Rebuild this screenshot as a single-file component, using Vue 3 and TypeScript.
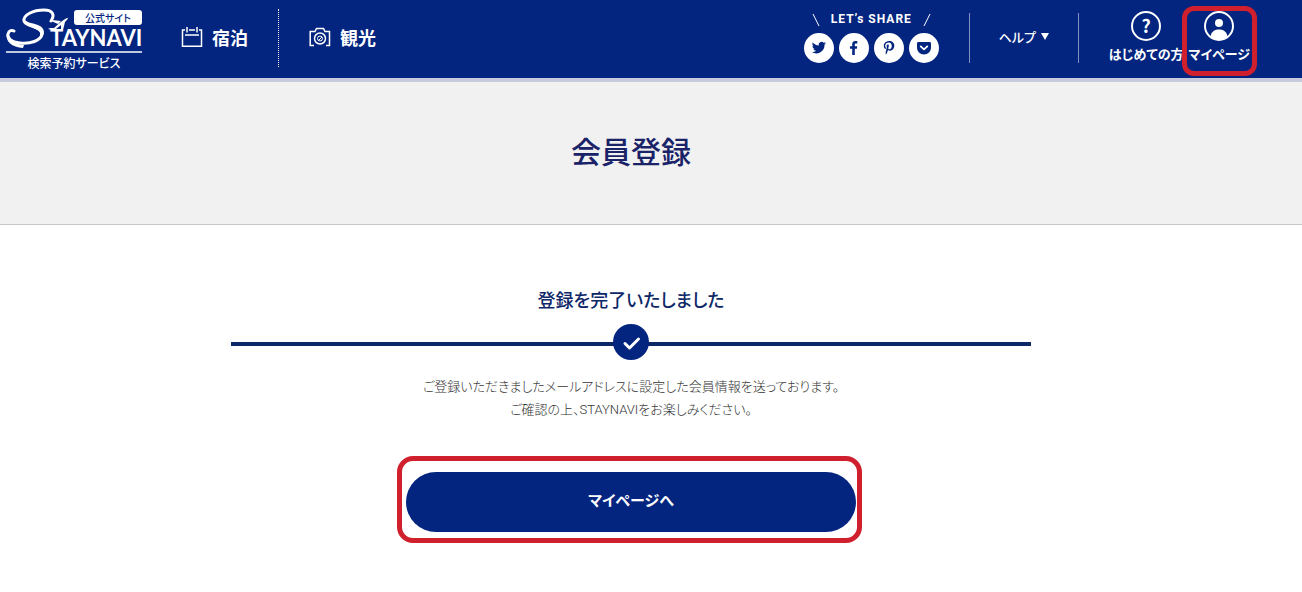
<script setup lang="ts">
interface NavItem {
  label: string
  icon: 'calendar' | 'camera'
}

interface ShareItem {
  name: string
  path: string
}

const navItems: NavItem[] = [
  { label: '宿泊', icon: 'calendar' },
  { label: '観光', icon: 'camera' },
]

const shareItems: ShareItem[] = [
  {
    name: 'Twitter',
    path: 'M22 10.2c-.5.3-1.1.4-1.7.5.6-.4 1-.9 1.2-1.6-.6.3-1.2.6-1.8.7a2.9 2.9 0 0 0-5 2.6c-2.4-.1-4.5-1.3-5.9-3-.8 1.4-.4 3 .9 3.9-.5 0-.9-.1-1.3-.4 0 1.4 1 2.6 2.3 2.9-.4.1-.9.1-1.3 0 .4 1.2 1.4 2 2.7 2a5.8 5.8 0 0 1-4.2 1.2 8.2 8.2 0 0 0 12.6-7.3c.6-.4 1.1-.9 1.5-1.5z',
  },
  {
    name: 'Facebook',
    path: 'M13.2 22v-6.2H11v-2.6h2.2v-1.9C13.2 9.1 14.5 8 16.4 8c.9 0 1.7.1 1.9.1v2.3H17c-1 0-1.2.5-1.2 1.2v1.6h2.4l-.3 2.6h-2.1V22z',
  },
  {
    name: 'Pinterest',
    path: 'M15.3 8c-3.600 0-5.500 2.400-5.500 4.900 0 1.200.6 2.600 1.600 3.100.3.100.3 0 .5-1 .1-.2 0-.3-.1-.4-1.200-1.600-.5-5.100 2.900-5.100 4.300 0 3.600 6.800.8 6.800-.8 0-1.400-.6-1.200-1.400.2-.9.600-1.800.6-2.400 0-1.600-2.300-1.400-2.300.7 0 .7.200 1.100.2 1.100l-1 4.100c-.3 1.100 0 2.900.1 3.100.1.100.2.100.2 0 .5-.7 1.100-1.700 1.400-2.900l.5-1.900c.3.500 1.100 1 1.900 1 2.600 0 4.400-2.300 4.400-5.200C20.300 9.800 18.100 8 15.300 8z',
  },
  {
    name: 'Pocket',
    path: 'M9.3 9h11.400c.7 0 1.300.6 1.300 1.300v4.200c0 3.900-3.100 7-7 7s-7-3.100-7-7v-4.200C8 9.600 8.600 9 9.300 9zm2.600 3.500a.9.900 0 0 0-.8 1.500l3.300 3.100c.4.300.8.300 1.200 0l3.300-3.100c.9-.9-.3-2.100-1.200-1.300L15 15.200l-2.600-2.500z',
  },
]

const message: string[] = [
  'ご登録いただきましたメールアドレスに設定した会員情報を送っております。',
  'ご確認の上、STAYNAVIをお楽しみください。',
]
</script>

<template>
  <div class="page">
    <header class="header">
      <a class="logo" href="#" aria-label="STAYNAVI">
        <svg class="logo-mark" viewBox="0 0 136 46" aria-hidden="true">
          <path
            d="M45 14C49 8 47 3 38 3C27 3 17 8 18 14C19 20 37 19 36 27C35 34 24 37 14 36C5 35 1 31 2 27C3 23 6 23 8 24"
            fill="none" stroke="#fff" stroke-width="3" stroke-linecap="round" stroke-linejoin="round"
          />
          <path d="M18 12C17 20 28 19 33 24C36 28 33 32 30 34C38 32 41 23 34 19C29 16 20 16 18 12z" fill="#fff" />
          <path d="M1 26C1 34 8 37 18 38L17 41C6 40-1 35 1 26z" fill="#fff" />
          <path
            d="M44 25C49 20 55 14 61 11C63 11 61 13 59 15L57 23L55 23L55 18L50 22L49 25L47 23L42 22L44 21L48 21L52 17L45 14L46 13L55 14L51 18z"
            fill="#fff"
          />
          <text class="logo-text" x="44" y="39">TAYNAVI</text>
          <path d="M0 45H136" stroke="#fff" stroke-width="1.5" />
        </svg>
        <span class="logo-badge">公式サイト</span>
        <span class="logo-sub">検索予約サービス</span>
      </a>

      <nav class="nav">
        <a v-for="item in navItems" :key="item.label" class="nav-item" href="#">
          <svg v-if="item.icon === 'calendar'" class="nav-icon" viewBox="0 0 22 22" aria-hidden="true">
            <path
              d="M4 4H1.500V20.200H20.500V4H18M8 4H14M6 1V6.500M16 1V6.500M4 9H18"
              fill="none" stroke="#fff" stroke-width="1.5"
            />
          </svg>
          <svg v-else class="nav-icon" viewBox="0 0 22 22" aria-hidden="true">
            <path
              d="M5 19.500H1.200V5.500H6L7.500 2.500H14.500L16 5.500H20.500V19.500H17"
              fill="none" stroke="#fff" stroke-width="1.5"
            />
            <circle cx="11" cy="12.500" r="5.500" fill="none" stroke="#fff" stroke-width="1.5" />
            <circle cx="11" cy="12.500" r="2.500" fill="none" stroke="#fff" />
            <path d="M10 14L13 11" fill="none" stroke="#fff" />
          </svg>
          <span>{{ item.label }}</span>
        </a>
      </nav>

      <div class="share">
        <p class="share-title">
          <svg class="slash" viewBox="0 0 8 12" aria-hidden="true"><path d="M1 0L7 12" stroke="#fff" /></svg>
          <span>LET’s SHARE</span>
          <svg class="slash" viewBox="0 0 8 12" aria-hidden="true"><path d="M7 0L1 12" stroke="#fff" /></svg>
        </p>
        <div class="share-list">
          <a v-for="item in shareItems" :key="item.name" class="share-link" href="#" :aria-label="item.name">
            <svg viewBox="0 0 30 30" aria-hidden="true">
              <path :d="item.path" fill="#03257f" fill-rule="evenodd" />
            </svg>
          </a>
        </div>
      </div>

      <button class="help" type="button">
        <span>ヘルプ</span>
        <svg class="caret" viewBox="0 0 8 7" aria-hidden="true"><path d="M0 0H8L4 7z" fill="#fff" /></svg>
      </button>

      <div class="account">
        <a class="account-link" href="#">
          <span class="question">?</span>
          <span>はじめての方</span>
        </a>
        <a class="account-link marked" href="#">
          <svg class="account-icon" viewBox="0 0 30 30" aria-hidden="true">
            <circle cx="15" cy="15" r="14" fill="none" stroke="#fff" stroke-width="2" />
            <circle cx="15" cy="12" r="4" fill="#fff" />
            <path d="M6.500 26C7 21 10 18.500 15 18.500S23 21 23.500 26C19 30 11 30 6.500 26z" fill="#fff" />
          </svg>
          <span>マイページ</span>
        </a>
      </div>
    </header>

    <div class="hero">
      <h1>会員登録</h1>
    </div>

    <main class="content">
      <h2>登録を完了いたしました</h2>
      <div class="divider">
        <svg class="check" viewBox="0 0 36 36" aria-hidden="true">
          <circle cx="18" cy="18" r="18" fill="#03257f" />
          <path
            d="M12 19.500L16.500 24L25.500 15"
            fill="none" stroke="#fff" stroke-width="3" stroke-linecap="round" stroke-linejoin="round"
          />
        </svg>
      </div>
      <p class="message">
        <span v-for="line in message" :key="line">{{ line }}</span>
      </p>
      <div class="action">
        <button class="submit" type="button">マイページへ</button>
      </div>
    </main>
  </div>
</template>

<style>
body {
  margin: 0;
  background: #fff;
}
</style>

<style scoped>
.page {
  font-family: "Noto Sans CJK JP", "Noto Sans", sans-serif;
  font-feature-settings: "palt";
  color: #333;
}

a {
  color: inherit;
  text-decoration: none;
}

button {
  border: 0;
  padding: 0;
  background: none;
  color: inherit;
  font: inherit;
  font-feature-settings: inherit;
  cursor: pointer;
}

.header {
  display: flex;
  box-sizing: border-box;
  height: 82px;
  padding: 0 52px 0 6px;
  background: #03257f;
  border-bottom: 4px solid #c8cbdc;
  color: #fff;
}

.logo {
  position: relative;
  flex: none;
  width: 136px;
  padding-top: 7px;
}

.logo-mark {
  display: block;
  width: 136px;
  height: 46px;
  overflow: visible;
}

.logo-text {
  font: 700 22px Lato, sans-serif;
  fill: #fff;
}

.logo-badge {
  position: absolute;
  top: 10px;
  right: 0;
  width: 68px;
  border-radius: 3px;
  background: #fff;
  color: #03257f;
  font-size: 10px;
  font-weight: 500;
  line-height: 15px;
  text-align: center;
}

.logo-sub {
  display: block;
  font-size: 12px;
  font-weight: 500;
  line-height: 20px;
  text-align: center;
}

.nav {
  display: flex;
  align-items: flex-start;
  margin: 9px auto 0 9px;
}

.nav-item {
  display: flex;
  align-items: center;
  gap: 9px;
  box-sizing: border-box;
  height: 58px;
  padding: 0 30px 2px;
  font-size: 18px;
  font-weight: 700;
}

.nav-item + .nav-item {
  border-left: 1px dotted #fff;
}

.nav-icon {
  width: 22px;
  height: 22px;
}

.share {
  padding: 12px 30px 0 0;
}

.share-title {
  display: flex;
  align-items: center;
  justify-content: center;
  gap: 11px;
  margin: 0 0 6px;
  font: 700 12px/15px Roboto, sans-serif;
  letter-spacing: 1px;
}

.slash {
  width: 8px;
  height: 12px;
}

.share-list {
  display: flex;
  gap: 5px;
}

.share-link {
  width: 30px;
  height: 30px;
  border-radius: 50%;
  background: #fff;
}

.share-link svg {
  display: block;
}

.help {
  display: flex;
  align-items: center;
  justify-content: center;
  gap: 5px;
  box-sizing: border-box;
  width: 110px;
  height: 50px;
  margin-top: 13px;
  padding-bottom: 3px;
  border: solid #8192bf;
  border-width: 0 1px;
  font-size: 13px;
  font-weight: 500;
}

.caret {
  width: 8px;
  height: 7px;
}

.account {
  display: flex;
  align-items: flex-start;
  gap: 5px;
  padding: 11px 0 0 30px;
}

.account-link {
  position: relative;
  display: flex;
  flex-direction: column;
  align-items: center;
  gap: 3px;
  font-size: 13px;
  font-weight: 700;
  line-height: 20px;
  white-space: nowrap;
}

.question {
  box-sizing: border-box;
  width: 30px;
  height: 30px;
  border: 2px solid #fff;
  border-radius: 50%;
  font-size: 18px;
  line-height: 24px;
  text-align: center;
}

.account-icon {
  width: 30px;
  height: 30px;
}

.marked::after {
  content: "";
  position: absolute;
  inset: -5px -7px -12px -6px;
  border: 5px solid #d0202e;
  border-radius: 12px;
}

.hero {
  padding: 44px 40px 50px 0;
  background: #f1f1f1;
  border-bottom: 1px solid #c8c8c8;
  text-align: center;
}

h1 {
  margin: 0;
  color: #1a2368;
  font-size: 30px;
  font-weight: 500;
  line-height: 48px;
}

.content {
  display: flex;
  flex-direction: column;
  align-items: center;
  padding: 59px 40px 48px 0;
}

h2 {
  margin: 0 0 10px;
  color: #0d2768;
  font-size: 18px;
  font-weight: 500;
  line-height: 30px;
}

.divider {
  display: flex;
  justify-content: center;
  width: 100%;
  max-width: 800px;
  background: linear-gradient(#0d2768, #0d2768) center 18px / 100% 4px no-repeat;
}

.check {
  width: 36px;
  height: 36px;
}

.message {
  display: flex;
  flex-direction: column;
  margin: 15px 0 51px;
  font-family: Roboto, "Noto Sans CJK JP", sans-serif;
  font-size: 13px;
  font-weight: 300;
  line-height: 23px;
  text-align: center;
}

.action {
  position: relative;
  width: 100%;
  max-width: 450px;
}

.action::after {
  content: "";
  position: absolute;
  inset: -16px -6px -11px -9px;
  border: 5px solid #d0202e;
  border-radius: 16px;
  pointer-events: none;
}

.submit {
  display: block;
  width: 100%;
  height: 60px;
  padding-bottom: 5px;
  border-radius: 30px;
  background: #03257f;
  color: #fff;
  font-size: 15px;
  font-weight: 700;
}
</style>
